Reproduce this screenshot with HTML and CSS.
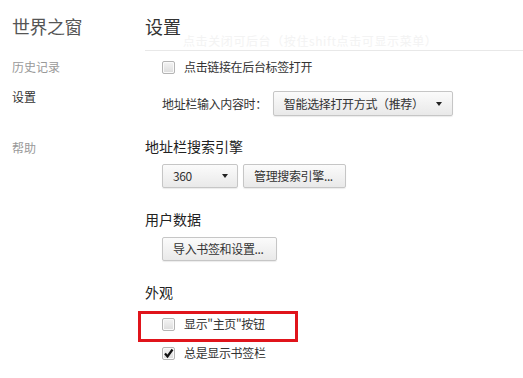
FILE: index.html
```html
<!DOCTYPE html>
<html lang="zh-CN">
<head>
<meta charset="utf-8">
<title>设置</title>
<link rel="stylesheet" href="styles.css">
</head>
<body>
<div class="page">
  <aside class="sidebar">
    <div class="brand">世界之窗</div>
    <nav class="nav">
      <div class="nav-item muted">历史记录</div>
      <div class="nav-item active">设置</div>
      <div class="nav-item muted help">帮助</div>
    </nav>
  </aside>
  <main class="main">
    <header class="header">
      <h1 class="title">设置</h1>
      <div class="ghost">点击关闭可后台（按住shift点击可显示菜单）</div>
    </header>
    <div class="row first">
      <span class="checkbox"></span><span class="label">点击链接在后台标签打开</span>
    </div>
    <div class="row select-row">
      <span class="field-label">地址栏输入内容时：</span>
      <span class="btn select wide">智能选择打开方式（推荐）<span class="arrow"></span></span>
    </div>
    <h2 class="section">地址栏搜索引擎</h2>
    <div class="row buttons">
      <span class="btn select small">360<span class="arrow"></span></span>
      <span class="btn manage">管理搜索引擎...</span>
    </div>
    <h2 class="section">用户数据</h2>
    <div class="row buttons">
      <span class="btn import">导入书签和设置...</span>
    </div>
    <h2 class="section">外观</h2>
    <div class="highlight">
      <div class="row in-box">
        <span class="checkbox"></span><span class="label">显示"主页"按钮</span>
      </div>
    </div>
    <div class="row last">
      <span class="checkbox checked"><svg width="11" height="11" viewBox="0 0 11 11"><path d="M2 5.5 L4.5 8.5 L9.5 1.5" fill="none" stroke="#111" stroke-width="2.2" stroke-linejoin="miter"/></svg></span><span class="label">总是显示书签栏</span>
    </div>
  </main>
</div>
</body>
</html>
```

FILE: styles.css
```css
html, body {
  margin: 0;
  padding: 0;
  background: #fff;
}
body {
  font-family: "Noto Sans CJK SC", "Liberation Sans", sans-serif;
  font-size: 12px;
  color: #333;
}
.page {
  display: flex;
  width: 523px;
  height: 378px;
  overflow: hidden;
}
.sidebar {
  width: 145px;
  flex: none;
  padding-left: 12px;
  box-sizing: border-box;
}
.brand {
  padding-top: 14px;
  font-size: 18px;
  line-height: 24px;
  color: #555;
  letter-spacing: -0.5px;
}
.nav {
  margin-top: 19px;
}
.nav-item {
  line-height: 20px;
  height: 20px;
  margin-bottom: 10px;
}
.nav-item.help {
  margin-top: 31px;
}
.muted { color: #999; }
.active { color: #333; }

.main {
  flex: 1;
  min-width: 0;
}
.header {
  position: relative;
  height: 51px;
  box-sizing: border-box;
  border-bottom: 1px solid #e8e8e8;
}
.title {
  margin: 0;
  padding-top: 14px;
  font-size: 18px;
  line-height: 24px;
  font-weight: normal;
  color: #333;
}
.ghost {
  position: absolute;
  left: 38px;
  top: 34px;
  font-size: 12px;
  line-height: 14px;
  letter-spacing: 0.6px;
  color: #f3f3f3;
  white-space: nowrap;
}
.row {
  display: flex;
  align-items: center;
  padding-left: 17px;
  line-height: 20px;
  letter-spacing: -0.35px;
}
.row.first {
  margin-top: 6px;
  height: 20px;
}
.checkbox {
  width: 11px;
  height: 11px;
  border: 1px solid #b4b4b4;
  border-radius: 2px;
  background: linear-gradient(#f4f4f4, #dcdcdc);
  box-shadow: inset 0 0 0 1px #fafafa;
  display: flex;
  align-items: center;
  justify-content: center;
  flex: none;
}
.checkbox.checked svg { display: block; }
.label {
  margin-left: 9px;
  color: #333;
}
.select-row {
  margin-top: 14px;
}
.field-label {
  color: #333;
  margin-right: 6px;
}
.btn {
  display: inline-flex;
  align-items: center;
  box-sizing: border-box;
  border: 1px solid #c6c6c6;
  border-radius: 2px;
  background: linear-gradient(#fbfbfb, #e9e9e9);
  box-shadow: 0 1px 1px rgba(0,0,0,0.08);
  color: #333;
  white-space: nowrap;
}
.select {
  position: relative;
  padding-left: 10px;
}
.wide {
  width: 180px;
  height: 25px;
}
.small {
  width: 76px;
  height: 24px;
}
.arrow {
  position: absolute;
  right: 10px;
  top: 50%;
  margin-top: -2px;
  width: 0;
  height: 0;
  border-left: 3.5px solid transparent;
  border-right: 3.5px solid transparent;
  border-top: 4px solid #222;
}
.small .arrow { right: 9px; }
.section {
  margin: 20px 0 0 0;
  font-size: 14px;
  line-height: 20px;
  font-weight: normal;
  color: #222;
}
.buttons {
  margin-top: 8px;
}
.manage {
  margin-left: 5px;
  width: 103px;
  height: 24px;
  padding-left: 10px;
}
.import {
  width: 115px;
  height: 24px;
  padding-left: 10px;
}
.section + .buttons + .section { margin-top: 21px; }
.highlight {
  margin-top: 9px;
  margin-left: -7px;
  width: 160px;
  height: 31px;
  box-sizing: border-box;
  border: 3px solid #e0141b;
  padding-bottom: 5px;
}
.row.in-box {
  padding-left: 21px;
  height: 20px;
}
.row.last {
  margin-top: 1px;
  height: 20px;
}
```
